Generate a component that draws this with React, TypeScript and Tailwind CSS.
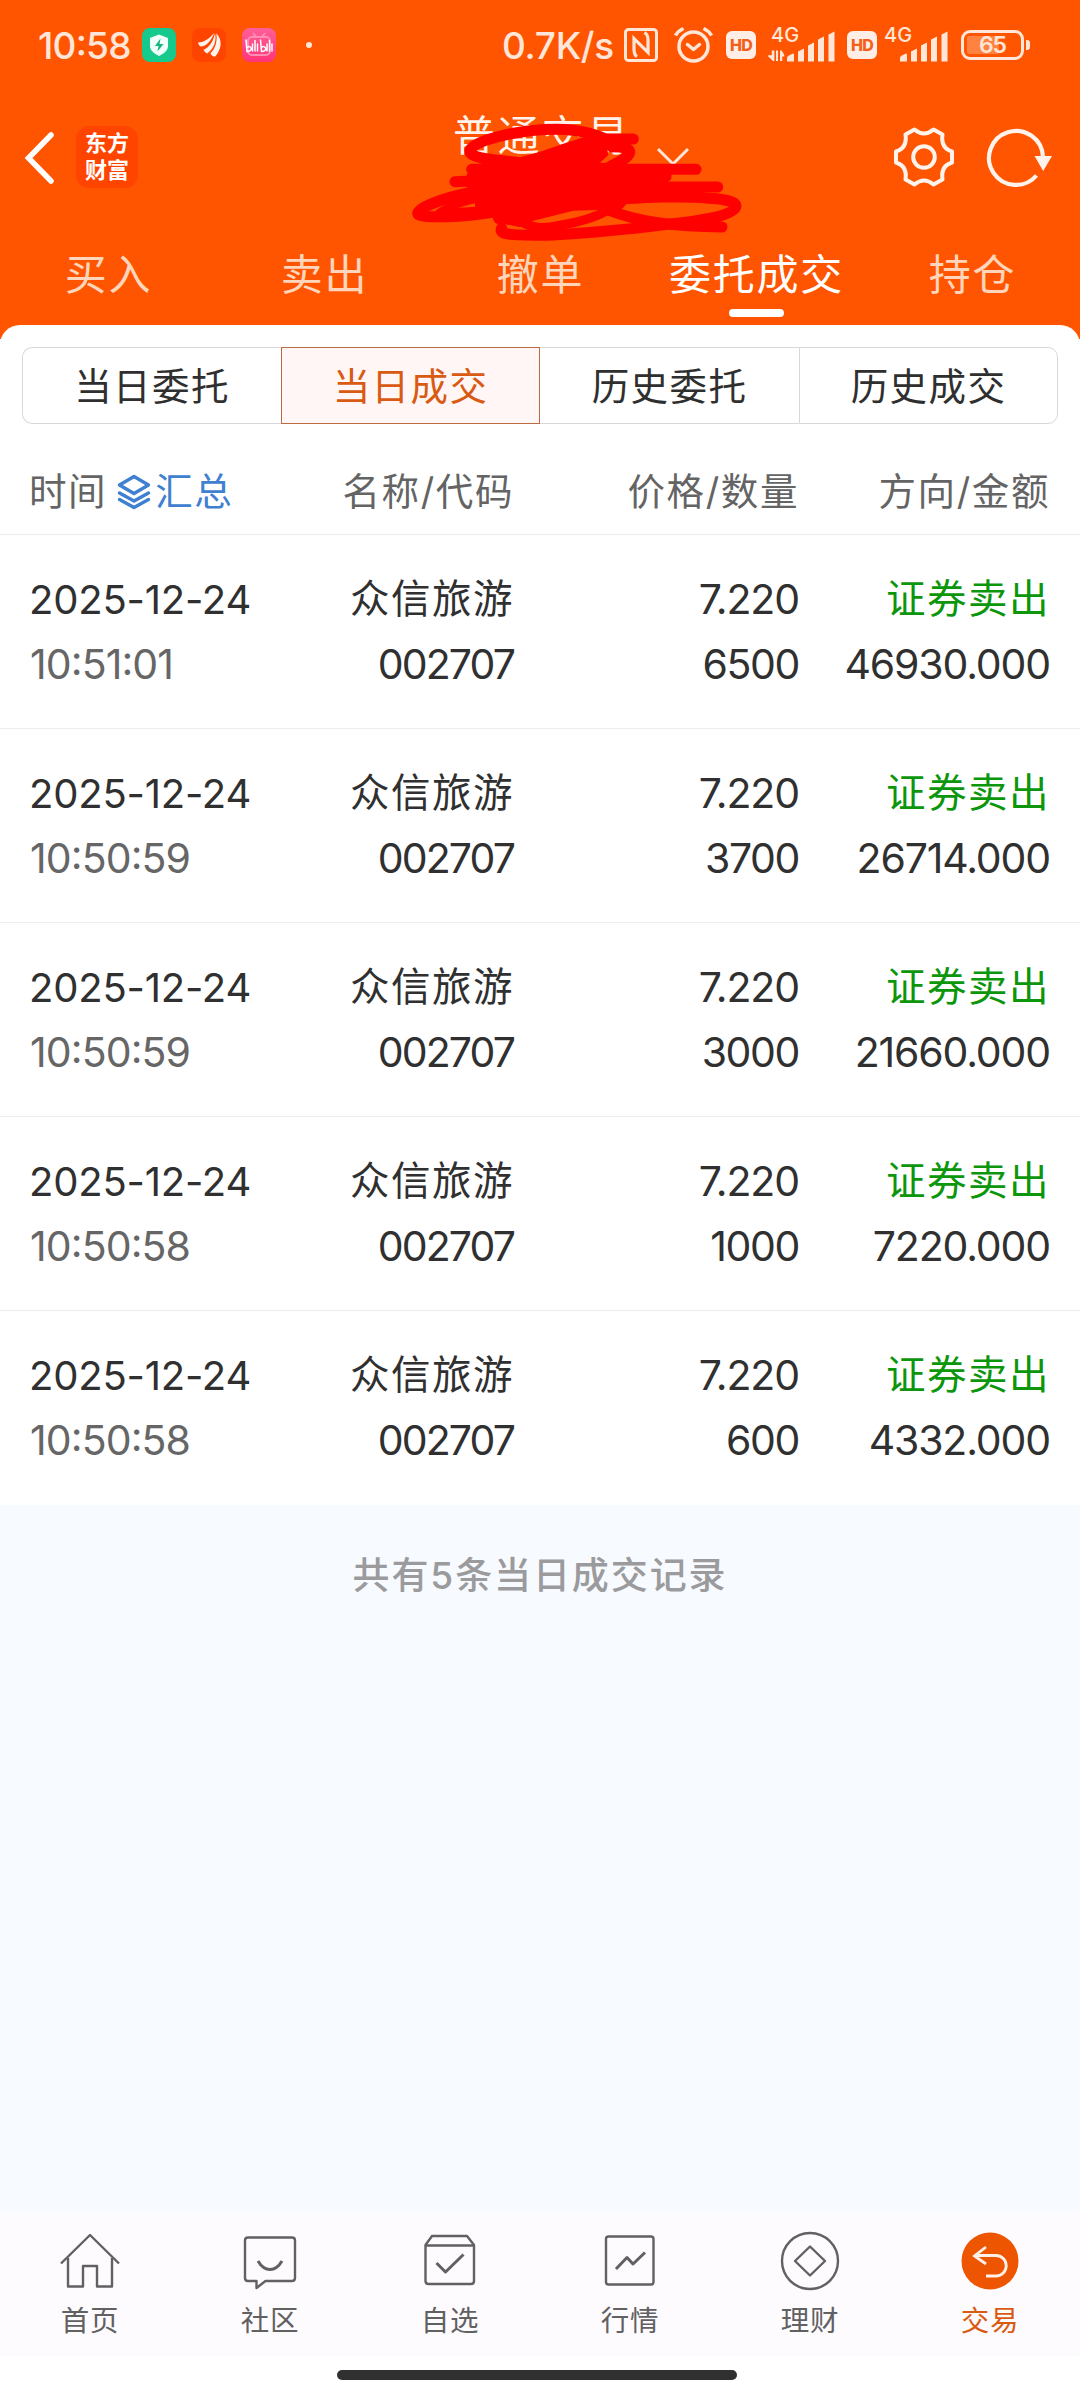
import type { ReactNode } from "react";

const orders = [
  { time: "10:51:01", qty: "6500", amount: "46930.000" },
  { time: "10:50:59", qty: "3700", amount: "26714.000" },
  { time: "10:50:59", qty: "3000", amount: "21660.000" },
  { time: "10:50:58", qty: "1000", amount: "7220.000" },
  { time: "10:50:58", qty: "600", amount: "4332.000" },
];

function HdBadge() {
  return (
    <div className="flex h-[28px] w-[30px] items-center justify-center rounded-[6px] bg-[#ffeee5] text-[16px] leading-none font-extrabold tracking-[-0.8px] text-[#f2601c]">
      HD
    </div>
  );
}

function Signal({ data }: { data?: boolean }) {
  return (
    <svg width="68" height="50" viewBox="0 -5 68 50" fill="#ffe6d8">
      <text x="3" y="17" fontSize="20" fontWeight="500" fontFamily="Inter, sans-serif">
        4G
      </text>
      {data && (
        <path d="M3.8 25.5h2.6v10.5h-1.4l-4.8-4.4v-1.4h3.6zM8 25.5h2v10.500h-2zM12 25.500h1.700l2.500 4.300v1.700h-2v4.500h-2.200z" />
      )}
      <path d="M19 36.500v-3.500q0-1.500 1.500-2.300l4-2q1.500-.5 1.500 1v6.800z" />
      <path d="M30 36.500v-10l6-3v13zM40 36.500v-16l6-3v19zM50 36.500v-22l6-3v25zM60.500 36.500v-27l6-3v30z" />
    </svg>
  );
}

function StatusBar() {
  return (
    <div className="flex h-[90px] items-center pl-[38px] text-[37px] leading-none font-medium text-[#ffe6d8]">
      <div className="w-[104px] tracking-[-0.8px] [font-feature-settings:'calt']">10:58</div>
      <svg width="34" height="34" viewBox="0 0 34 34">
        <rect width="34" height="34" rx="8" fill="#16ca8d" />
        <path d="M17 6.500l9 3.500v8c0 4.500-4 7.500-9 10-5-2.500-9-5.500-9-10v-8z" fill="#f1fff9" />
        <path d="M18.500 10.500l-5.500 7.500h3.500l-1 5.500 6-7.500h-4z" fill="#14b581" />
      </svg>
      <svg className="ml-[16px]" width="34" height="34" viewBox="0 0 34 34">
        <rect width="34" height="34" rx="8" fill="#ff4400" />
        <g fill="#fff4ec">
          <path d="M6 14.500C13 14.500 17.500 10 22 5.300C19.500 12.500 14.500 18.500 8.500 18.500Q6.500 17.500 6 14.500z" />
          <path d="M11.500 21.800C17.500 19.500 21.500 13 23 5.300C25 13 21.500 21.500 15 25.500Q12.500 24.500 11.500 21.800z" />
          <path d="M18.300 25.500C23.500 21 25.500 13 24.300 5.300C31 12 29.500 22 23 28.700Q19.500 28 18.300 25.500z" />
        </g>
      </svg>
      <svg className="ml-[16px]" width="34" height="34" viewBox="0 0 34 34">
        <defs>
          <linearGradient id="pink" x2="0" y2="1">
            <stop stopColor="#ff5f98" />
            <stop offset="1" stopColor="#ff3478" />
          </linearGradient>
        </defs>
        <rect width="34" height="34" rx="8" fill="url(#pink)" />
        <path d="M11 5l3 4M23 5l-3 4" stroke="#ff8db5" strokeWidth="2" />
        <rect x="6" y="9" width="22" height="18" rx="4" fill="none" stroke="#ff8db5" strokeWidth="2" />
        <g fill="none" stroke="#fff" strokeWidth="1.500" strokeLinecap="round">
          <path d="M4 12l1 11.500c6.500 0 4.500-6.500.5-4.500M10.500 16v7M13 12.500v10.500M15.500 16v7" />
          <path d="M18.500 12l1 11.500c6.500 0 4.500-6.500.5-4.500M25 16v7M27.500 12.500v10.500M30 16v7" />
        </g>
      </svg>
      <div className="ml-[30px] h-[6px] w-[6px] rounded-full bg-[#ffe6d8]" />
      <div className="ml-[190px] w-[122px] text-[37px] tracking-[-0.3px]">0.7K/s</div>
      <svg width="34" height="34" viewBox="0 0 34 34" fill="none" stroke="#ffe6d8">
        <rect x="1.500" y="1.500" width="31" height="31" rx="3" strokeWidth="3" />
        <path d="M13 28.500C10 27 10 24 10 21V10.500L24 24.500V12C24 8 23.500 6.500 20.500 4.500" strokeWidth="3.200" />
      </svg>
      <svg className="ml-[16px]" width="40" height="38" viewBox="0 0 40 38" fill="none" stroke="#ffe6d8" strokeWidth="3.500">
        <circle cx="19.500" cy="20.500" r="14.500" />
        <path d="M13.500 18.500l6 5 6-5" strokeLinecap="round" strokeLinejoin="round" />
        <path d="M1.500 9.500Q4 5 9.500 2.500M37.500 9.500Q35 5 29.500 2.500" />
      </svg>
      <div className="ml-[12px]"><HdBadge /></div>
      <div className="ml-[12px] -mt-px"><Signal data /></div>
      <div className="ml-[11px]"><HdBadge /></div>
      <div className="ml-[4px] -mt-px"><Signal /></div>
      <div className="ml-[12px] flex items-center">
        <div className="relative flex h-[30px] w-[63px] items-center justify-center rounded-[9px] border-3 border-[#ffe6d8]">
          <div className="absolute top-[3px] left-[3px] h-[18px] w-[32px] rounded-[2px] bg-[#ff8240]" />
          <span className="relative text-[23px] leading-none font-semibold tracking-[-1px]">65</span>
        </div>
        <div className="ml-[2px] h-[10px] w-[4px] rounded-r-[3px] bg-[#ffe6d8]" />
      </div>
    </div>
  );
}

function Scribble() {
  return (
    <svg className="absolute top-[110px] left-[400px]" width="350" height="140" viewBox="120 330 1050 420" fill="none" stroke="#ff0000" strokeWidth="33" strokeLinecap="round" strokeLinejoin="round">
      <path fill="#ff0000" stroke="none" d="M335 495L480 472L560 450L640 425L735 408L745 465L720 488L830 494L930 500Q942 530 920 548L920 605L800 612L785 628L640 632L520 662L480 682L405 665L395 650L345 650L345 590L320 560L320 525z" />
      <path d="M480 488C400 478 332 475 329 455C326 425 470 388 590 388C660 388 720 405 755 428" />
      <path d="M820 417H740C660 422 560 470 490 490" />
      <path d="M755 440Q812 440 809 458C805 478 760 490 735 510" />
      <path d="M335 508H1008" />
      <path d="M285 545L600 530H918" />
      <path d="M1073 561H400" />
      <path d="M340 576C240 595 165 628 174 643C180 655 310 652 400 636" />
      <path d="M238 638C260 622 300 606 370 592" strokeWidth="24" />
      <path d="M250 638L350 632" strokeWidth="24" />
      <path d="M780 596L900 590C1050 590 1128 598 1128 618C1125 650 1000 665 920 673C800 690 600 706 530 706C460 705 415 705 425 685" />
      <path d="M745 630C800 652 900 681 1086 681" />
      <path d="M415 658L480 662C520 690 560 685 600 676C650 668 710 650 745 630" strokeWidth="28" />
    </svg>
  );
}

function TitleBar() {
  return (
    <div className="flex h-[134px] items-center pl-[24px]">
      <svg width="32" height="54" viewBox="0 0 32 54" fill="none" stroke="#fff" strokeWidth="5.500" strokeLinecap="round" strokeLinejoin="miter">
        <path d="M27 5L4.500 28L27 51" />
      </svg>
      <div className="ml-[20px] flex h-[62px] w-[62px] flex-col items-center justify-center rounded-[13px] bg-[#ff4400] text-[22px] leading-[27px] font-bold text-white">
        <span>东方</span>
        <span>财富</span>
      </div>
      <div className="mb-[42px] ml-[315px] w-[180px] text-[42px] leading-[44px] tracking-[2.400px] whitespace-nowrap text-[#fff3ec]">
        普通交易
      </div>
      <svg className="ml-[22px]" width="36" height="20" viewBox="0 0 36 20" fill="none" stroke="#ffe6d8" strokeWidth="3">
        <path d="M3 2L18 17L33 2" />
      </svg>
      <svg className="ml-[202px]" width="62" height="62" viewBox="-31 -31 62 62" fill="none" stroke="#fff3ec" strokeWidth="4" strokeLinejoin="round">
        <circle r="10.800" />
        <path d="M-9.500 -27.500Q0 -19.500 9.500 -27.500L18.500 -22.500Q16.500 -9 28 -5.500V5.500Q16.500 9 18.500 22.500L9.500 27.500Q0 19.500 -9.500 27.500L-18.500 22.500Q-16.500 9 -28 5.500V-5.500Q-16.500 -9 -18.500 -22.500Z" />
      </svg>
      <svg className="ml-[30px]" width="68" height="62" viewBox="-31 -31 68 62" fill="none" stroke="#fff3ec" strokeWidth="4.200">
        <path d="M20.500 18.500A27 27 0 1 1 27 0" />
        <path d="M18.500 -1H36L27.200 14Z" fill="#fff3ec" stroke="none" />
      </svg>
    </div>
  );
}

function MainTabs() {
  const tabs = ["买入", "卖出", "撤单", "委托成交", "持仓"];
  return (
    <div className="grid grid-cols-5 text-[42px] leading-[60px] tracking-[1.800px]">
      {tabs.map((t) => {
        const active = t === "委托成交";
        return (
          <div key={t} className={active ? "flex flex-col items-center pt-[21px] text-white" : "flex flex-col items-center pt-[21px] text-[#ffd5bc]"}>
            <span className="pl-px">{t}</span>
            {active && <i className="mt-[4px] h-[8px] w-[55px] rounded-full bg-white" />}
          </div>
        );
      })}
    </div>
  );
}

function Segments() {
  const base = "flex items-center justify-center";
  return (
    <div className="mx-[22px] grid h-[77px] grid-cols-4 text-[37.5px] tracking-[1.400px] text-[#2f2f2f]">
      <div className={base + " rounded-l-[10px] border border-r-0 border-[#d8d8dc] pt-[3px]"}>当日委托</div>
      <div className={base + " border border-[#bb6a42] bg-[#fff6f5] pt-[3px] text-[#d95a12]"}>当日成交</div>
      <div className={base + " border-y border-[#d8d8dc] pt-[3px]"}>历史委托</div>
      <div className={base + " rounded-r-[10px] border border-[#d8d8dc] pt-[3px]"}>历史成交</div>
    </div>
  );
}

const columns = "grid grid-cols-[300px_214px_285px_251px] pr-[30px]";

function OrderTable() {
  return (
    <div>
      <div className={columns + " mt-[25px] h-[86px] items-center border-b border-[#ececec] pt-px text-right text-[37.5px] tracking-[1.600px] text-[#646464]"}>
        <div className="flex items-center pl-[29px]">
          时间
          <svg className="ml-[10px]" width="34" height="36" viewBox="0 0 34 36" fill="none" stroke="#3f80d0" strokeWidth="3.400" strokeLinejoin="round" strokeLinecap="round">
            <path d="M17 2.500L31.500 11L17 19.500L2.500 11Z" />
            <path d="M2.500 19L17 27L31.500 19M2.500 25.500L17 33.500L31.500 25.500" />
          </svg>
          <span className="ml-[4px] text-[#3f80d0]">汇总</span>
        </div>
        <div>名称/代码</div>
        <div>价格/数量</div>
        <div>方向/金额</div>
      </div>
      {orders.map((o, i) => (
        <div key={i} className={columns + (i < 4 ? " border-b border-[#ececec]" : "") + " h-[194px] pt-[32px] text-right text-[41px] leading-[65px] text-[#303030]"}>
          <div className="pl-[29px] text-left">
            <div className="text-[40px] tracking-[-0.200px]">2025-12-24</div>
            <div className="pl-px tracking-[-0.900px] text-[#666] [font-feature-settings:'calt']">{o.time}</div>
          </div>
          <div>
            <div className="text-[39.5px] tracking-[1.500px]">众信旅游</div>
            <div className="tracking-[-1.900px]">002707</div>
          </div>
          <div>
            <div className="tracking-[-1.100px]">7.220</div>
            <div className="tracking-[-1.400px]">{o.qty}</div>
          </div>
          <div>
            <div className="text-[39.5px] tracking-[1.500px] text-[#0b960b]">证券卖出</div>
            <div className="tracking-[-1.150px]">{o.amount}</div>
          </div>
        </div>
      ))}
    </div>
  );
}

function NavItem({ label, active, children }: { label: string; active?: boolean; children: ReactNode }) {
  return (
    <div className={active ? "flex flex-col items-center text-[#d95a12]" : "flex flex-col items-center text-[#616161]"}>
      <svg width="64" height="64" viewBox="-32 -32 64 64" fill="none" stroke="currentColor" strokeWidth="2.400" strokeLinejoin="round">
        {children}
      </svg>
      <span className="mt-[8px] text-[28.5px] leading-[40px] tracking-[0.800px]">{label}</span>
    </div>
  );
}

function BottomNav() {
  return (
    <nav className="grid h-[144px] grid-cols-6 bg-[#fefbff] pt-[17px]">
      <NavItem label="首页">
        <path d="M-29 2.500L0 -26L29 2.500" />
        <path d="M-22 -3V25.500H-7V5H7V25.500H22V-3" />
      </NavItem>
      <NavItem label="社区">
        <path d="M-22 -23.500H22Q25 -23.500 25 -20.500V17Q25 20 22 20H-4.500L-13.500 27V20H-22Q-25 20 -25 17V-20.500Q-25 -23.500 -22 -23.500Z" />
        <path d="M-12 0Q-7 8.500 0 8.500T12 0" strokeWidth="3" />
      </NavItem>
      <NavItem label="自选">
        <path d="M-24.500 -16V20Q-24.500 23 -21.500 23H21Q24 23 24 20V-16L17 -25H-18Z" />
        <path d="M-24.500 -15.500H24" />
        <path d="M-13.500 2L-4.500 11L13.500 -6.500" strokeWidth="3" />
      </NavItem>
      <NavItem label="行情">
        <rect x="-24" y="-24.500" width="47.500" height="48" rx="2.500" />
        <path d="M-14 8L-3 -3.500L3 3L15 -8.500" strokeWidth="3" />
      </NavItem>
      <NavItem label="理财">
        <circle r="28" />
        <path d="M0 -14.500L15 0L0 14.500L-15 0Z" />
      </NavItem>
      <NavItem label="交易" active>
        <circle r="28.500" fill="#ee5500" stroke="none" />
        <path d="M-4 -14L-15.500 -5L-4 3M-15 -5.500H6A10 10 0 0 1 6 15H-4" stroke="#fff1e8" strokeWidth="2.800" strokeLinejoin="miter" />
      </NavItem>
    </nav>
  );
}

export default function App() {
  return (
    <div className="flex h-[2400px] w-[1080px] flex-col overflow-hidden bg-white font-['Inter','Noto_Sans_CJK_SC',sans-serif]">
      <header className="relative h-[339px] shrink-0 bg-[#ff5500]">
        <StatusBar />
        <TitleBar />
        <MainTabs />
        <Scribble />
      </header>
      <main className="relative -mt-[14px] flex flex-1 flex-col rounded-t-[20px] bg-white pt-[22px]">
        <Segments />
        <OrderTable />
        <div className="flex-1 bg-[#f7faff] pt-[46px] text-center text-[37px] leading-[50px] font-medium tracking-[1.900px] text-[#9b9b9d]">
          共有5条当日成交记录
        </div>
      </main>
      <BottomNav />
      <div className="flex h-[44px] shrink-0 justify-center pt-[14px] pr-[6px]">
        <div className="h-[10px] w-[400px] rounded-full bg-[#303030]" />
      </div>
    </div>
  );
}
